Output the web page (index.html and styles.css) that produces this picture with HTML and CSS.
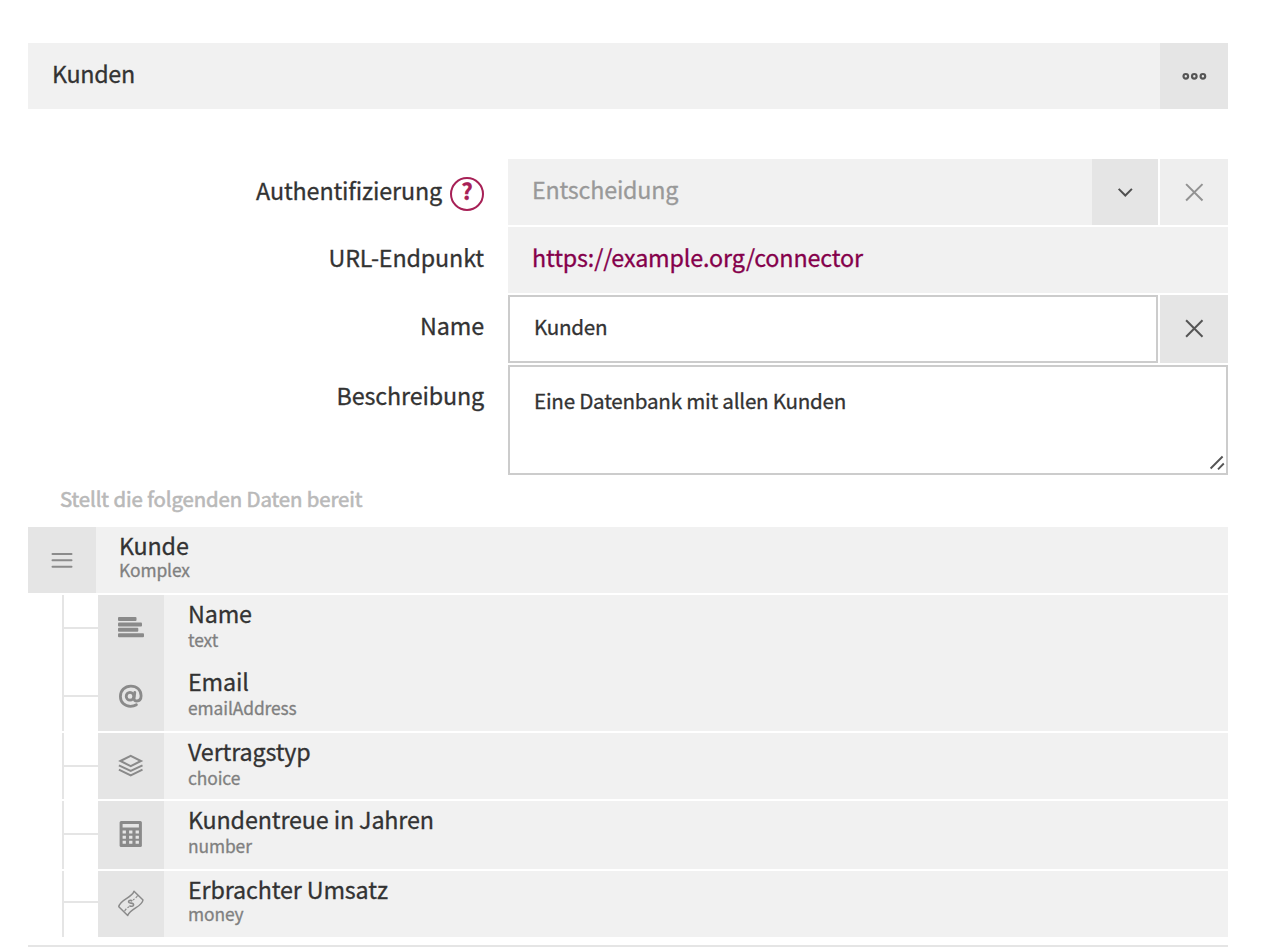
FILE: index.html
```html
<!DOCTYPE html>
<html lang="de">
<head>
<meta charset="utf-8">
<title>Kunden</title>
<link rel="stylesheet" href="styles.css">
</head>
<body>
<main class="page">
  <header class="header">
    <h1 class="header-title">Kunden</h1>
    <button class="btn" aria-label="Menü">
      <svg class="icon" width="26" height="10" viewBox="0 0 26 10" fill="none" stroke="#555" stroke-width="2.2"><circle cx="4.800" cy="5.300" r="2.300"/><circle cx="13.300" cy="5.300" r="2.300"/><circle cx="21.900" cy="5.300" r="2.300"/></svg>
    </button>
  </header>

  <section class="form">
    <div class="row">
      <div class="label label-help"><span>Authentifizierung</span><span class="help">?</span></div>
      <div class="control">
        <div class="select">Entscheidung</div>
        <button class="btn btn-arrow" aria-label="Auswählen">
          <svg class="icon" width="16" height="10" viewBox="0 0 16 10" fill="none" stroke="#4f4f4f" stroke-width="2"><path d="M1.700 1.900 8.300 8.500l6.600-6.600"/></svg>
        </button>
        <button class="btn btn-clear btn-disabled" aria-label="Leeren">
          <svg class="icon" width="20" height="20" viewBox="0 0 20 20" fill="none" stroke="#929292" stroke-width="2"><path d="M2.100 2.100l16.400 16.400M18.500 2.100 2.100 18.500"/></svg>
        </button>
      </div>
    </div>
    <div class="row">
      <div class="label">URL-Endpunkt</div>
      <div class="control"><a class="url">https://example.org/connector</a></div>
    </div>
    <div class="row row-name">
      <div class="label">Name</div>
      <div class="control">
        <div class="input">Kunden</div>
        <button class="btn btn-clear" aria-label="Leeren">
          <svg class="icon" width="20" height="20" viewBox="0 0 20 20" fill="none" stroke="#555" stroke-width="2"><path d="M2.100 1.300l16.400 16.400M18.500 1.300 2.100 17.700"/></svg>
        </button>
      </div>
    </div>
    <div class="row row-text">
      <div class="label">Beschreibung</div>
      <div class="control">
        <div class="textarea">Eine Datenbank mit allen Kunden
          <svg class="grip" width="16" height="16" viewBox="0 0 16 16" fill="none" stroke="#555" stroke-width="1.900"><path d="M1.600 13.500 13.600 1.500M9 14.300l5.800-5.800"/></svg>
        </div>
      </div>
    </div>
  </section>

  <h2 class="caption">Stellt die folgenden Daten bereit</h2>

  <section class="tree">
    <div class="item item-root">
      <div class="tile tile-root">
        <svg width="23" height="16" viewBox="0 0 23 16" stroke="#8b8b8b" stroke-width="2" stroke-linecap="round"><path d="M1.500 2h19M1.500 8.300h19M1.500 14.700h19"/></svg>
      </div>
      <div class="body body-tight"><div class="name">Kunde</div><div class="type">Komplex</div></div>
    </div>
    <div class="item item-joined">
      <div class="branch"></div>
      <div class="tile">
        <svg class="raised" width="26" height="22" viewBox="0 0 26 22" fill="#8a8a8a"><rect y="1" width="18.500" height="4" rx="1"/><rect y="6.400" width="24" height="4" rx="1"/><rect y="11.800" width="20.300" height="4" rx="1"/><rect y="17.200" width="26" height="4" rx="1"/></svg>
      </div>
      <div class="body"><div class="name">Name</div><div class="type">text</div></div>
    </div>
    <div class="item item-last-joined">
      <div class="branch"></div>
      <div class="tile">
        <svg width="26" height="28" viewBox="0 0 26 28" fill="none" stroke="#8a8a8a" stroke-width="2.800" stroke-linecap="round"><ellipse cx="12" cy="13.300" rx="3.800" ry="3.900"/><path d="M16.800 9.400l-.7 5.900c-.2 1.900 1 2.700 2.600 2.700 3.100 0 4.400-2.400 4.400-5.200C23.100 6.800 18.800 3.100 12.900 3.100 6.700 3.100 2.400 7.600 2.400 13.500c0 5.900 4.200 9.800 10.100 9.800 2.400 0 4.200-.5 5.900-1.500"/></svg>
      </div>
      <div class="body"><div class="name">Email</div><div class="type">emailAddress</div></div>
    </div>
    <div class="item">
      <div class="branch"></div>
      <div class="tile">
        <svg width="26" height="24" viewBox="0 0 26 24" fill="none" stroke="#8a8a8a" stroke-width="2"><path d="M2.400 7 12.700 1.900 23 7l-10.300 5.100zM.9 11.400l11.800 5.600 11.800-5.600M.9 15.600l11.800 5.700 11.800-5.700"/></svg>
      </div>
      <div class="body"><div class="name">Vertragstyp</div><div class="type">choice</div></div>
    </div>
    <div class="item item-tall">
      <div class="branch"></div>
      <div class="tile">
        <svg width="24" height="28" viewBox="0 0 24 28"><rect x=".600" width="22.300" height="26" rx="1.500" fill="#8a8a8a"/><path fill="#e5e5e5" d="M3.600 3h16.300v3.400H3.600zM3.600 9.600h3.300v3H3.600zm6.500 0h3.300v3h-3.300zm6.500 0h3.300v3h-3.300zM3.600 14.700h3.300v3H3.600zm6.500 0h3.300v3h-3.300zm6.500 0h3.300v3h-3.300zM3.600 19.800h3.300v3H3.600zm6.500 0h3.300v3h-3.300zm6.500 0h3.300v3h-3.300z"/></svg>
      </div>
      <div class="body"><div class="name">Kundentreue in Jahren</div><div class="type">number</div></div>
    </div>
    <div class="item item-end">
      <div class="branch"></div>
      <div class="tile">
        <svg width="26" height="28" viewBox="0 0 26 28" fill="none" stroke="#8a8a8a" stroke-width="1.500" stroke-linejoin="round"><path d="M16 1.200 25 10c-1.200 7.300-12.500 8-15.300 15.500L.8 16.700C2 9 13.500 8.500 16 1.200z"/><path stroke-dasharray="3 1.500" stroke-width="1.200" d="M19.600 5.500c-1.100 2-2.800 3.300-4.600 4.500M6.600 21.200c1-2 2.600-3.400 4.400-4.400"/><path stroke-width="1.600" d="M14.300 11c-1.700-1.300-4-.5-3.700 1.100.4 1.700 4.900.3 5 2.600 0 1.700-2.500 2.100-4.200.9M10.200 10.600l1.200 1M14.600 15.200l1.200 1"/></svg>
      </div>
      <div class="body body-tight"><div class="name">Erbrachter Umsatz</div><div class="type">money</div></div>
    </div>
  </section>
  <div class="rule"></div>
</main>
</body>
</html>
```
FILE: styles.css
```css
* { box-sizing: border-box; }
body {
  margin: 0;
  background: #fff;
  color: #333;
  font-family: "Noto Sans CJK SC", "Noto Sans", sans-serif;
  font-size: 23.3px;
  letter-spacing: -0.14px;
  -webkit-text-stroke: 0.3px currentColor;
  height: 951px;
  overflow: hidden;
}
.page { width: 1200px; margin: 43px 0 0 28px; }
h1, h2 { margin: 0; font-weight: 400; }
.header { display: flex; height: 66px; background: #f1f1f1; }
.header-title { flex: 1; padding-left: 24px; font-size: 23.3px; line-height: 60px; letter-spacing: -0.3px; }
.btn {
  display: flex;
  flex: none;
  align-items: center;
  justify-content: center;
  width: 68px;
  padding: 0;
  border: 0;
  background: #e5e5e5;
}
.icon { display: block; }
.btn-arrow { width: 66px; }
.btn-clear { margin-left: 2px; }
.btn-disabled { background: #eee; }

.form { display: flex; flex-direction: column; gap: 2px; margin-top: 50px; }
.row { display: flex; height: 66px; }
.row-name { height: 68px; }
.row-text { height: 110px; }
.label { width: 480px; padding-right: 24px; text-align: right; line-height: 60px; }
.label-help { display: flex; justify-content: flex-end; gap: 8px; line-height: 62px; }
.help {
  width: 34px;
  height: 34px;
  margin-top: 18px;
  border: 2px solid #a72056;
  border-radius: 50%;
  color: #a72056;
  font-weight: 700;
  font-size: 22.500px;
  line-height: 22px;
  text-align: center;
}
.control { display: flex; flex: 1; background: #fff; }
.select, .url { flex: 1; padding-left: 24px; background: #f1f1f1; line-height: 60px; }
.select { color: #999; letter-spacing: -0.2px; }
.url { color: #85004b; }
.input, .textarea {
  flex: 1;
  padding-left: 24px;
  border: 2px solid #ccc;
  font-size: 20.600px;
  line-height: 58px;
  letter-spacing: -0.24px;
}
.textarea { position: relative; line-height: 67px; }
.grip { position: absolute; right: 1px; bottom: 2px; }

.caption {
  height: 52px;
  padding-left: 32px;
  color: #b9b9b9;
  font-size: 20.400px;
  line-height: 47px;
  letter-spacing: -0.1px;
  -webkit-text-stroke-width: 0.6px;
}

.item { display: flex; height: 66px; margin-bottom: 2px; }
.item-joined { height: 68px; margin-bottom: 0; }
.item-last-joined, .item-tall { height: 68px; }
.branch { position: relative; width: 36px; margin-left: 34px; border-left: 2px solid #e5e5e5; }
.branch::after {
  content: "";
  position: absolute;
  left: 0;
  right: 0;
  top: 32px;
  height: 2px;
  background: #e5e5e5;
}
.item-end .branch::after { top: 30px; }
.item .tile {
  display: flex;
  flex: none;
  align-items: center;
  justify-content: center;
  width: 66px;
  background: #e5e5e5;
}
.item .tile-root { width: 68px; }
.raised { margin-bottom: 4px; }
.body { flex: 1; padding-left: 24px; background: #f1f1f1; }
.item-root .body { padding-left: 23px; }
.name { height: 36px; line-height: 36px; }
.type { color: #808080; font-size: 17.400px; line-height: 17px; letter-spacing: -0.1px; }
.body-tight .type { margin-top: -2px; }
.rule { height: 2px; margin-top: 8px; background: #e5e5e5; }
```
